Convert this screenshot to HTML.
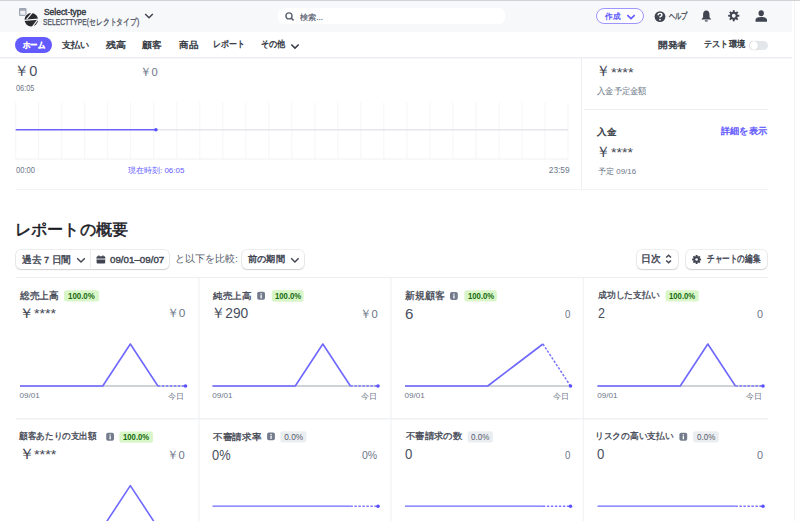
<!DOCTYPE html>
<html><head><meta charset="utf-8"><title>Stripe dashboard</title>
<style>
*{box-sizing:border-box;margin:0;padding:0}
html,body{width:800px;height:521px;overflow:hidden;background:#fff}
body{position:relative;font-family:"Liberation Sans",sans-serif;color:#414552}
.a{position:absolute;white-space:nowrap;line-height:1;transform-origin:0 0}
.btn{background:#fff;border-radius:5px;box-shadow:0 0 0 1px rgba(64,68,82,.09),0 1px 1.5px rgba(0,0,0,.13)}
</style></head><body>
<svg class="a" style="left:0;top:0" width="800" height="521" viewBox="0 0 800 521"><rect x="0" y="0" width="800" height="1" rx="0" fill="#d2d3d7" /><rect x="0" y="1" width="792" height="31" rx="0" fill="#f6f8fa" /><rect x="794" y="1" width="1" height="520" rx="0" fill="#f2f3f5" /><rect x="0" y="57" width="792" height="1.6" rx="0" fill="#eceef1" /><line x1="15.7" y1="102.3" x2="15.7" y2="159" stroke="#f4f5f7" stroke-width="1" /><line x1="38.71" y1="102.3" x2="38.71" y2="159" stroke="#f4f5f7" stroke-width="1" /><line x1="61.73" y1="102.3" x2="61.73" y2="159" stroke="#f4f5f7" stroke-width="1" /><line x1="84.74" y1="102.3" x2="84.74" y2="159" stroke="#f4f5f7" stroke-width="1" /><line x1="107.75" y1="102.3" x2="107.75" y2="159" stroke="#f4f5f7" stroke-width="1" /><line x1="130.77" y1="102.3" x2="130.77" y2="159" stroke="#f4f5f7" stroke-width="1" /><line x1="153.78" y1="102.3" x2="153.78" y2="159" stroke="#f4f5f7" stroke-width="1" /><line x1="176.79" y1="102.3" x2="176.79" y2="159" stroke="#f4f5f7" stroke-width="1" /><line x1="199.8" y1="102.3" x2="199.8" y2="159" stroke="#f4f5f7" stroke-width="1" /><line x1="222.82" y1="102.3" x2="222.82" y2="159" stroke="#f4f5f7" stroke-width="1" /><line x1="245.83" y1="102.3" x2="245.83" y2="159" stroke="#f4f5f7" stroke-width="1" /><line x1="268.84" y1="102.3" x2="268.84" y2="159" stroke="#f4f5f7" stroke-width="1" /><line x1="291.86" y1="102.3" x2="291.86" y2="159" stroke="#f4f5f7" stroke-width="1" /><line x1="314.87" y1="102.3" x2="314.87" y2="159" stroke="#f4f5f7" stroke-width="1" /><line x1="337.88" y1="102.3" x2="337.88" y2="159" stroke="#f4f5f7" stroke-width="1" /><line x1="360.9" y1="102.3" x2="360.9" y2="159" stroke="#f4f5f7" stroke-width="1" /><line x1="383.91" y1="102.3" x2="383.91" y2="159" stroke="#f4f5f7" stroke-width="1" /><line x1="406.92" y1="102.3" x2="406.92" y2="159" stroke="#f4f5f7" stroke-width="1" /><line x1="429.93" y1="102.3" x2="429.93" y2="159" stroke="#f4f5f7" stroke-width="1" /><line x1="452.95" y1="102.3" x2="452.95" y2="159" stroke="#f4f5f7" stroke-width="1" /><line x1="475.96" y1="102.3" x2="475.96" y2="159" stroke="#f4f5f7" stroke-width="1" /><line x1="498.97" y1="102.3" x2="498.97" y2="159" stroke="#f4f5f7" stroke-width="1" /><line x1="521.99" y1="102.3" x2="521.99" y2="159" stroke="#f4f5f7" stroke-width="1" /><line x1="545" y1="102.3" x2="545" y2="159" stroke="#f4f5f7" stroke-width="1" /><line x1="568.01" y1="102.3" x2="568.01" y2="159" stroke="#f4f5f7" stroke-width="1" /><line x1="15.7" y1="159" x2="568" y2="159" stroke="#eef0f2" stroke-width="1" /><line x1="155.9" y1="129.8" x2="568" y2="129.8" stroke="#e4e6ea" stroke-width="1.5" /><line x1="15.7" y1="129.8" x2="155.9" y2="129.8" stroke="#6b63ff" stroke-width="1.6" /><circle cx="155.9" cy="129.8" r="1.8" fill="#5a52ff"/><line x1="581.5" y1="58" x2="581.5" y2="189" stroke="#eceef1" stroke-width="1" /><line x1="584" y1="109.5" x2="768" y2="109.5" stroke="#eceef1" stroke-width="1" /><line x1="16" y1="189.5" x2="768" y2="189.5" stroke="#f2f3f5" stroke-width="1" /><line x1="16" y1="277.5" x2="768" y2="277.5" stroke="#eceef1" stroke-width="1.2" /><line x1="199" y1="278" x2="199" y2="521" stroke="#eef0f2" stroke-width="1" /><line x1="391" y1="278" x2="391" y2="521" stroke="#eef0f2" stroke-width="1" /><line x1="583.3" y1="278" x2="583.3" y2="521" stroke="#eef0f2" stroke-width="1" /><line x1="16" y1="418.8" x2="768" y2="418.8" stroke="#eceef1" stroke-width="1.2" /><line x1="20" y1="386" x2="185.5" y2="386" stroke="#bfc4cc" stroke-width="1.3" /><polyline points="20,386 47.58,386 75.17,386 102.75,386 130.33,344 157.92,386" fill="none" stroke="#6f68ff" stroke-width="1.6" stroke-linejoin="round"/><line x1="157.92" y1="386" x2="185.5" y2="386" stroke="#7a73ff" stroke-width="1.5" stroke-dasharray="2.4 1.6"/><circle cx="185.5" cy="386" r="1.8" fill="#5a52ff"/><line x1="212.5" y1="386" x2="378" y2="386" stroke="#bfc4cc" stroke-width="1.3" /><polyline points="212.5,386 240.08,386 267.67,386 295.25,386 322.83,344 350.42,386" fill="none" stroke="#6f68ff" stroke-width="1.6" stroke-linejoin="round"/><line x1="350.42" y1="386" x2="378" y2="386" stroke="#7a73ff" stroke-width="1.5" stroke-dasharray="2.4 1.6"/><circle cx="378" cy="386" r="1.8" fill="#5a52ff"/><line x1="405" y1="386" x2="570.5" y2="386" stroke="#bfc4cc" stroke-width="1.3" /><polyline points="405,386 432.58,386 460.17,386 487.75,386 515.33,365 542.92,344" fill="none" stroke="#6f68ff" stroke-width="1.6" stroke-linejoin="round"/><line x1="542.92" y1="344" x2="570.5" y2="386" stroke="#7a73ff" stroke-width="1.5" stroke-dasharray="2.4 1.6"/><circle cx="570.5" cy="386" r="1.8" fill="#5a52ff"/><line x1="597.5" y1="386" x2="763" y2="386" stroke="#bfc4cc" stroke-width="1.3" /><polyline points="597.5,386 625.08,386 652.67,386 680.25,386 707.83,344 735.42,386" fill="none" stroke="#6f68ff" stroke-width="1.6" stroke-linejoin="round"/><line x1="735.42" y1="386" x2="763" y2="386" stroke="#7a73ff" stroke-width="1.5" stroke-dasharray="2.4 1.6"/><circle cx="763" cy="386" r="1.8" fill="#5a52ff"/><line x1="20" y1="527.6" x2="185.5" y2="527.6" stroke="#bfc4cc" stroke-width="1.3" /><polyline points="20,527.6 47.58,527.6 75.17,527.6 102.75,527.6 130.33,485.6 157.92,527.6" fill="none" stroke="#6f68ff" stroke-width="1.6" stroke-linejoin="round"/><line x1="157.92" y1="527.6" x2="185.5" y2="527.6" stroke="#7a73ff" stroke-width="1.5" stroke-dasharray="2.4 1.6"/><circle cx="185.5" cy="527.6" r="1.8" fill="#5a52ff"/><polyline points="212.5,506.2 240.08,506.2 267.67,506.2 295.25,506.2 322.83,506.2 350.42,506.2" fill="none" stroke="#6f68ff" stroke-width="1.3" stroke-linejoin="round"/><line x1="350.42" y1="506.2" x2="378" y2="506.2" stroke="#7a73ff" stroke-width="1.5" stroke-dasharray="2.4 1.6"/><circle cx="378" cy="506.2" r="1.8" fill="#5a52ff"/><polyline points="405,506.2 432.58,506.2 460.17,506.2 487.75,506.2 515.33,506.2 542.92,506.2" fill="none" stroke="#6f68ff" stroke-width="1.3" stroke-linejoin="round"/><line x1="542.92" y1="506.2" x2="570.5" y2="506.2" stroke="#7a73ff" stroke-width="1.5" stroke-dasharray="2.4 1.6"/><circle cx="570.5" cy="506.2" r="1.8" fill="#5a52ff"/><polyline points="597.5,506.2 625.08,506.2 652.67,506.2 680.25,506.2 707.83,506.2 735.42,506.2" fill="none" stroke="#6f68ff" stroke-width="1.3" stroke-linejoin="round"/><line x1="735.42" y1="506.2" x2="763" y2="506.2" stroke="#7a73ff" stroke-width="1.5" stroke-dasharray="2.4 1.6"/><circle cx="763" cy="506.2" r="1.8" fill="#5a52ff"/><rect x="64" y="290.25" width="35" height="11.25" rx="2.5" fill="#d9f6c8" /><rect x="271.75" y="290" width="31.85" height="11.75" rx="2.5" fill="#d9f6c8" /><rect x="464.4" y="290.25" width="32.5" height="11.25" rx="2.5" fill="#d9f6c8" /><rect x="665.5" y="290.25" width="33.25" height="11.25" rx="2.5" fill="#d9f6c8" /><rect x="119.4" y="431.5" width="33.6" height="11.3" rx="2.5" fill="#d9f6c8" /><rect x="280.25" y="431.25" width="26.25" height="11.25" rx="2.5" fill="#ebeef1" /><rect x="467.5" y="431.25" width="25.5" height="11.25" rx="2.5" fill="#ebeef1" /><rect x="693" y="431.25" width="25.75" height="11.25" rx="2.5" fill="#ebeef1" /><rect x="257.2" y="291.8" width="7.8" height="7.9" rx="1.8" fill="#737b8c" /><rect x="260.5" y="295.1" width="1.3" height="3.2" rx="0" fill="#fff" /><rect x="260.5" y="293.3" width="1.3" height="1.2" rx="0" fill="#fff" /><rect x="450" y="292" width="7.8" height="7.9" rx="1.8" fill="#737b8c" /><rect x="453.3" y="295.3" width="1.3" height="3.2" rx="0" fill="#fff" /><rect x="453.3" y="293.5" width="1.3" height="1.2" rx="0" fill="#fff" /><rect x="106.2" y="432.8" width="7.8" height="7.9" rx="1.8" fill="#737b8c" /><rect x="109.5" y="436.1" width="1.3" height="3.2" rx="0" fill="#fff" /><rect x="109.5" y="434.3" width="1.3" height="1.2" rx="0" fill="#fff" /><rect x="267.1" y="432.4" width="7.8" height="7.9" rx="1.8" fill="#737b8c" /><rect x="270.4" y="435.7" width="1.3" height="3.2" rx="0" fill="#fff" /><rect x="270.4" y="433.9" width="1.3" height="1.2" rx="0" fill="#fff" /><rect x="679.4" y="432.8" width="7.8" height="7.9" rx="1.8" fill="#737b8c" /><rect x="682.7" y="436.1" width="1.3" height="3.2" rx="0" fill="#fff" /><rect x="682.7" y="434.3" width="1.3" height="1.2" rx="0" fill="#fff" /></svg>
<!-- logo -->
<svg class="a" style="left:18px;top:7px" width="22" height="22" viewBox="0 0 22 22">
<rect x="1.6" y="1.7" width="6.3" height="6.6" rx="0.6" fill="#eef0f4" stroke="#9ea5b3" stroke-width="1.2"/>
<rect x="1.6" y="1.7" width="6.3" height="2" fill="#9ea5b3"/>
<circle cx="13.3" cy="12.8" r="7.4" fill="#f6f8fa"/>
<circle cx="13.3" cy="12.8" r="6.8" fill="#2a2a2e"/>
<path d="M14.2 5.6 L8.6 12.4" stroke="#f6f8fa" stroke-width="1.1"/>
<path d="M5.6 13.4 L21 12.2" stroke="#f6f8fa" stroke-width="1.3"/>
<path d="M19.6 12.9 L14.2 20.2" stroke="#f6f8fa" stroke-width="1.1"/>
</svg>
<svg class="a" style="left:144px;top:12px" width="10" height="8" viewBox="0 0 10 8"><path d="M1.2 2 L5 5.8 L8.8 2" stroke="#414552" stroke-width="1.5" fill="none"/></svg>
<!-- search -->
<div class="a" style="left:277.5px;top:7.8px;width:227px;height:16px;background:#fff;border-radius:6px"></div>
<svg class="a" style="left:285px;top:12px" width="10" height="9" viewBox="0 0 10 9"><circle cx="4" cy="3.9" r="3" stroke="#5b6170" stroke-width="1.4" fill="none"/><path d="M6.2 6.1 L8.6 8.4" stroke="#5b6170" stroke-width="1.5"/></svg>
<!-- create -->
<div class="a" style="left:596px;top:7.8px;width:48px;height:16.5px;border:1.3px solid #9d96ff;border-radius:8.5px;background:#fdfdff"></div>
<svg class="a" style="left:626px;top:14px" width="10" height="6" viewBox="0 0 10 6"><path d="M1.3 1.2 L5 4.6 L8.7 1.2" stroke="#635bff" stroke-width="1.6" fill="none"/></svg>
<!-- help -->
<svg class="a" style="left:654px;top:11px" width="12" height="12" viewBox="0 0 12 12"><circle cx="6" cy="5.6" r="5.4" fill="#414552"/><path d="M4.1 4.3 Q4.1 2.4 6 2.4 Q7.9 2.4 7.9 4 Q7.9 5.1 6 5.8 V6.6" stroke="#fff" stroke-width="1.4" fill="none"/><circle cx="6" cy="8.6" r=".85" fill="#fff"/></svg>
<!-- bell -->
<svg class="a" style="left:701px;top:10px" width="11" height="12" viewBox="0 0 11 12"><path d="M5.3 .5 C2.9 .5 2.1 2.4 2.1 4.6 V7.3 L.3 9.4 H10.3 L8.5 7.3 V4.6 C8.5 2.4 7.7 .5 5.3 .5Z" fill="#414552"/><rect x="3.8" y="10.2" width="3" height="1.4" rx=".7" fill="#414552"/></svg>
<!-- gear -->
<svg class="a" style="left:728px;top:10px" width="12" height="12" viewBox="0 0 12 12"><g stroke="#414552" stroke-width="1.9"><path d="M5.75 .2 V11.3"/><path d="M.2 5.75 H11.3"/><path d="M1.8 1.8 L9.7 9.7"/><path d="M9.7 1.8 L1.8 9.7"/></g><circle cx="5.75" cy="5.75" r="3.9" fill="#414552"/><circle cx="5.75" cy="5.75" r="1.9" fill="#f6f8fa"/></svg>
<!-- person -->
<svg class="a" style="left:755px;top:10px" width="13" height="12" viewBox="0 0 13 12"><ellipse cx="6.25" cy="3.3" rx="2.7" ry="3" fill="#414552"/><path d="M.5 11.8 V10 C.5 8 2.5 6.9 6.25 6.9 C10 6.9 12 8 12 10 V11.8Z" fill="#414552"/></svg>
<!-- home pill -->
<div class="a" style="left:15.4px;top:36.8px;width:36.5px;height:16.3px;border-radius:8.2px;background:#635bff"></div>
<svg class="a" style="left:290px;top:42.5px" width="10" height="7" viewBox="0 0 10 7"><path d="M1.3 1.5 L5 5.1 L8.7 1.5" stroke="#353a44" stroke-width="1.5" fill="none"/></svg>
<!-- toggle -->
<div class="a" style="left:749.2px;top:40.6px;width:18.7px;height:9.8px;border-radius:5px;background:#e3e6ea"></div>
<div class="a" style="left:750px;top:41.4px;width:8.2px;height:8.2px;border-radius:50%;background:#fff;box-shadow:0 0 1px rgba(0,0,0,.35)"></div>

<!-- report buttons -->
<div class="a btn" style="left:15.8px;top:249.5px;width:153.6px;height:19.2px"></div>
<div class="a" style="left:89.5px;top:250px;width:1px;height:18.2px;background:#ebeef1"></div>
<svg class="a" style="left:76px;top:256.5px" width="10" height="7" viewBox="0 0 10 7"><path d="M1.2 1.3 L5 5 L8.8 1.3" stroke="#414552" stroke-width="1.4" fill="none"/></svg>
<svg class="a" style="left:95.5px;top:255px" width="10" height="9" viewBox="0 0 10 9"><rect x=".6" y="1.2" width="8.6" height="7.2" rx="1" fill="#414552"/><rect x=".6" y="3.6" width="8.6" height="0.9" fill="#fff"/><rect x="2.3" y=".4" width="1.2" height="1.6" fill="#414552"/><rect x="6.3" y=".4" width="1.2" height="1.6" fill="#414552"/></svg>
<div class="a btn" style="left:241.8px;top:249.5px;width:62.2px;height:19.2px"></div>
<svg class="a" style="left:290px;top:257px" width="10" height="7" viewBox="0 0 10 7"><path d="M1.2 1.3 L4.9 5 L8.6 1.3" stroke="#414552" stroke-width="1.4" fill="none"/></svg>
<div class="a btn" style="left:637px;top:249.5px;width:41.2px;height:19.2px"></div>
<svg class="a" style="left:665px;top:254px" width="8" height="10" viewBox="0 0 8 10"><path d="M1.2 3.6 L3.6 1.2 L6 3.6 M1.2 6.4 L3.6 8.8 L6 6.4" stroke="#414552" stroke-width="1.4" fill="none"/></svg>
<div class="a btn" style="left:686px;top:249.5px;width:81px;height:19.2px"></div>
<svg class="a" style="left:691.5px;top:255px" width="10" height="9" viewBox="0 0 10 9"><g stroke="#414552" stroke-width="1.9"><path d="M4.6 0 V9"/><path d="M0.1 4.5 H9.1"/><path d="M1.4 1.3 L7.8 7.7"/><path d="M7.8 1.3 L1.4 7.7"/></g><circle cx="4.6" cy="4.5" r="3.2" fill="#414552"/><circle cx="4.6" cy="4.5" r="1.3" fill="#fff"/></svg>
<div class="a" style="left:43.54px;top:8.86px;font-size:8.2px;font-weight:400;-webkit-text-stroke:0.4px #353a44;color:#353a44;transform:scaleX(1.03)">Select-type</div>
<div class="a" style="left:42.66px;top:18.23px;font-size:8.9px;font-weight:400;-webkit-text-stroke:0.25px #4a4f5e;color:#4a4f5e;transform:scaleX(0.76)">SELECTTYPE(セレクトタイプ)</div>
<div class="a" style="left:299.92px;top:13.64px;font-size:8px;font-weight:400;-webkit-text-stroke:0.2px #5a6070;color:#5a6070;transform:scaleX(1.02)">検索...</div>
<div class="a" style="left:605.49px;top:13.35px;font-size:8.2px;font-weight:700;color:#635bff;transform:scaleX(0.95)">作成</div>
<div class="a" style="left:668.52px;top:12.19px;font-size:8.5px;font-weight:400;-webkit-text-stroke:0.35px #414552;color:#414552;transform:scaleX(0.69)">ヘルプ</div>
<div class="a" style="left:22.69px;top:41.36px;font-size:9.3px;font-weight:700;-webkit-text-stroke:0.25px #ffffff;color:#ffffff;transform:scaleX(0.81)">ホーム</div>
<div class="a" style="left:61.81px;top:40.4px;font-size:9.4px;font-weight:400;-webkit-text-stroke:0.4px #353a44;color:#353a44;transform:scaleX(1.02)">支払い</div>
<div class="a" style="left:105.74px;top:40.4px;font-size:9.4px;font-weight:400;-webkit-text-stroke:0.4px #353a44;color:#353a44;transform:scaleX(1.11)">残高</div>
<div class="a" style="left:141.9px;top:40.4px;font-size:9.4px;font-weight:400;-webkit-text-stroke:0.4px #353a44;color:#353a44;transform:scaleX(1.09)">顧客</div>
<div class="a" style="left:178.65px;top:40.4px;font-size:9.4px;font-weight:400;-webkit-text-stroke:0.4px #353a44;color:#353a44;transform:scaleX(1.06)">商品</div>
<div class="a" style="left:213.43px;top:40.4px;font-size:9.3px;font-weight:400;-webkit-text-stroke:0.4px #353a44;color:#353a44;transform:scaleX(0.88)">レポート</div>
<div class="a" style="left:260.77px;top:40.4px;font-size:9.3px;font-weight:400;-webkit-text-stroke:0.4px #353a44;color:#353a44;transform:scaleX(0.9)">その他</div>
<div class="a" style="left:657.61px;top:40.4px;font-size:9.4px;font-weight:400;-webkit-text-stroke:0.4px #353a44;color:#353a44;transform:scaleX(1.08)">開発者</div>
<div class="a" style="left:704.11px;top:40.4px;font-size:9.3px;font-weight:400;-webkit-text-stroke:0.4px #353a44;color:#353a44;transform:scaleX(0.91)">テスト環境</div>
<div class="a" style="left:14.27px;top:64.1px;font-size:14.5px;font-weight:400;color:#4a4f5d">￥0</div>
<div class="a" style="left:140.49px;top:65.61px;font-size:11.7px;font-weight:400;color:#6c7688;transform:scaleX(0.95)">￥0</div>
<div class="a" style="left:15.7px;top:84.4px;font-size:8.3px;font-weight:400;color:#6c7688;transform:scaleX(0.89)">06:05</div>
<div class="a" style="left:16.18px;top:166.45px;font-size:8.3px;font-weight:400;color:#6c7688;transform:scaleX(0.91)">00:00</div>
<div class="a" style="left:127.95px;top:166.62px;font-size:8px;font-weight:400;color:#635bff">現在時刻: 06:05</div>
<div class="a" style="left:548.81px;top:166.12px;font-size:8.3px;font-weight:400;color:#6c7688">23:59</div>
<div class="a" style="left:596.01px;top:64.1px;font-size:14.5px;font-weight:400;color:#414552;transform:scaleX(0.95)">￥</div>
<div class="a" style="left:610.71px;top:65.75px;font-size:13.5px;font-weight:400;color:#414552;transform:scaleX(1.08)">****</div>
<div class="a" style="left:596.92px;top:86.82px;font-size:8.5px;font-weight:400;color:#6c7688;transform:scaleX(0.92)">入金予定金額</div>
<div class="a" style="left:597.49px;top:127.63px;font-size:9px;font-weight:400;-webkit-text-stroke:0.4px #353a44;color:#353a44;transform:scaleX(1.07)">入金</div>
<div class="a" style="left:720.91px;top:127.01px;font-size:9.1px;font-weight:400;-webkit-text-stroke:0.4px #635bff;color:#635bff;transform:scaleX(1.02)">詳細を表示</div>
<div class="a" style="left:595.53px;top:144.69px;font-size:14.5px;font-weight:400;color:#414552;transform:scaleX(0.95)">￥</div>
<div class="a" style="left:611.09px;top:145.55px;font-size:13.5px;font-weight:400;color:#414552;transform:scaleX(1.04)">****</div>
<div class="a" style="left:597.69px;top:167.52px;font-size:7.8px;font-weight:400;color:#6c7688;transform:scaleX(1.01)">予定 09/16</div>
<div class="a" style="left:14.9px;top:221.22px;font-size:16.4px;font-weight:400;-webkit-text-stroke:0.5px #1a1b25;color:#1a1b25;transform:scaleX(1.01)">レポートの概要</div>
<div class="a" style="left:21.68px;top:254.77px;font-size:9.5px;font-weight:400;-webkit-text-stroke:0.4px #414552;color:#414552;transform:scaleX(0.97)">過去 7 日間</div>
<div class="a" style="left:110.35px;top:255.05px;font-size:9.4px;font-weight:400;-webkit-text-stroke:0.4px #414552;color:#414552;transform:scaleX(1.04)">09/01–09/07</div>
<div class="a" style="left:174.97px;top:254.38px;font-size:9.7px;font-weight:400;color:#545969">と以下を比較:</div>
<div class="a" style="left:247.92px;top:255.03px;font-size:9.3px;font-weight:400;-webkit-text-stroke:0.4px #414552;color:#414552;transform:scaleX(1.02)">前の期間</div>
<div class="a" style="left:641.32px;top:254.03px;font-size:9.6px;font-weight:400;-webkit-text-stroke:0.4px #414552;color:#414552;transform:scaleX(0.99)">日次</div>
<div class="a" style="left:706.61px;top:254.27px;font-size:10.2px;font-weight:400;-webkit-text-stroke:0.4px #414552;color:#414552;transform:scaleX(0.76)">チャートの編集</div>
<div class="a" style="left:20px;top:291.4px;font-size:9.5px;font-weight:400;-webkit-text-stroke:0.3px #414552;color:#414552;transform:scaleX(0.97)">総売上高</div>
<div class="a" style="left:213px;top:291.4px;font-size:9.4px;font-weight:400;-webkit-text-stroke:0.3px #414552;color:#414552;transform:scaleX(1.06)">純売上高</div>
<div class="a" style="left:405.24px;top:291.4px;font-size:9.5px;font-weight:400;-webkit-text-stroke:0.3px #414552;color:#414552;transform:scaleX(0.99)">新規顧客</div>
<div class="a" style="left:597.58px;top:291.4px;font-size:9.2px;font-weight:400;-webkit-text-stroke:0.3px #414552;color:#414552;transform:scaleX(0.98)">成功した支払い</div>
<div class="a" style="left:68.49px;top:292.41px;font-size:8.9px;font-weight:700;color:#176b10;transform:scaleX(0.89)">100.0%</div>
<div class="a" style="left:275.12px;top:292.41px;font-size:8.9px;font-weight:700;color:#176b10;transform:scaleX(0.87)">100.0%</div>
<div class="a" style="left:468.01px;top:292.41px;font-size:8.9px;font-weight:700;color:#176b10;transform:scaleX(0.87)">100.0%</div>
<div class="a" style="left:669.38px;top:292.41px;font-size:8.9px;font-weight:700;color:#176b10;transform:scaleX(0.87)">100.0%</div>
<div class="a" style="left:19.29px;top:305.79px;font-size:14.4px;font-weight:400;color:#414552;transform:scaleX(1.07)">￥</div>
<div class="a" style="left:34.46px;top:308.11px;font-size:12.8px;font-weight:400;color:#414552;transform:scaleX(1.1)">****</div>
<div class="a" style="left:210.99px;top:305.68px;font-size:14.5px;font-weight:400;color:#4a4f5d;transform:scaleX(0.95)">￥290</div>
<div class="a" style="left:404.67px;top:306.78px;font-size:14px;font-weight:400;color:#4a4f5d;transform:scaleX(1.08)">6</div>
<div class="a" style="left:598.07px;top:307.44px;font-size:13.8px;font-weight:400;color:#4a4f5d;transform:scaleX(0.91)">2</div>
<div class="a" style="left:166.79px;top:308.48px;font-size:11.8px;font-weight:400;color:#6c7688">￥0</div>
<div class="a" style="left:360.31px;top:308.96px;font-size:11.8px;font-weight:400;color:#6c7688;transform:scaleX(0.95)">￥0</div>
<div class="a" style="left:564.89px;top:308.84px;font-size:11.5px;font-weight:400;color:#6c7688;transform:scaleX(0.84)">0</div>
<div class="a" style="left:757.05px;top:308.84px;font-size:11.5px;font-weight:400;color:#6c7688;transform:scaleX(0.94)">0</div>
<div class="a" style="left:19.41px;top:392.28px;font-size:8.1px;font-weight:400;color:#6c7688">09/01</div>
<div class="a" style="left:168.41px;top:391.55px;font-size:8.3px;font-weight:400;color:#6c7688">今日</div>
<div class="a" style="left:212.26px;top:392.28px;font-size:8.1px;font-weight:400;color:#6c7688">09/01</div>
<div class="a" style="left:361.26px;top:391.55px;font-size:8.3px;font-weight:400;color:#6c7688">今日</div>
<div class="a" style="left:404.41px;top:392.28px;font-size:8.1px;font-weight:400;color:#6c7688">09/01</div>
<div class="a" style="left:553.41px;top:391.55px;font-size:8.3px;font-weight:400;color:#6c7688">今日</div>
<div class="a" style="left:597.26px;top:392.28px;font-size:8.1px;font-weight:400;color:#6c7688">09/01</div>
<div class="a" style="left:746.26px;top:391.55px;font-size:8.3px;font-weight:400;color:#6c7688">今日</div>
<div class="a" style="left:19.45px;top:432.3px;font-size:9.2px;font-weight:400;-webkit-text-stroke:0.3px #414552;color:#414552;transform:scaleX(0.96)">顧客あたりの支出額</div>
<div class="a" style="left:212.75px;top:432.3px;font-size:9.4px;font-weight:400;-webkit-text-stroke:0.3px #414552;color:#414552;transform:scaleX(1.07)">不審請求率</div>
<div class="a" style="left:405.75px;top:432.3px;font-size:9.3px;font-weight:400;-webkit-text-stroke:0.3px #414552;color:#414552;transform:scaleX(1.04)">不審請求の数</div>
<div class="a" style="left:595.15px;top:432.3px;font-size:9px;font-weight:400;-webkit-text-stroke:0.3px #414552;color:#414552;transform:scaleX(0.97)">リスクの高い支払い</div>
<div class="a" style="left:123.38px;top:433.04px;font-size:8.9px;font-weight:700;color:#176b10;transform:scaleX(0.87)">100.0%</div>
<div class="a" style="left:284.24px;top:433.23px;font-size:8.3px;font-weight:400;color:#545969">0.0%</div>
<div class="a" style="left:470.68px;top:433.23px;font-size:8.3px;font-weight:400;color:#545969;transform:scaleX(0.97)">0.0%</div>
<div class="a" style="left:696.68px;top:433.23px;font-size:8.3px;font-weight:400;color:#545969;transform:scaleX(0.97)">0.0%</div>
<div class="a" style="left:18.71px;top:447.27px;font-size:14.6px;font-weight:400;color:#414552;transform:scaleX(1.04)">￥</div>
<div class="a" style="left:34.19px;top:449.11px;font-size:12.8px;font-weight:400;color:#414552;transform:scaleX(1.12)">****</div>
<div class="a" style="left:212.34px;top:448.58px;font-size:13.8px;font-weight:400;color:#4a4f5d;transform:scaleX(0.93)">0%</div>
<div class="a" style="left:405.17px;top:446.68px;font-size:14.5px;font-weight:400;color:#4a4f5d;transform:scaleX(0.91)">0</div>
<div class="a" style="left:597.32px;top:446.68px;font-size:14.5px;font-weight:400;color:#4a4f5d;transform:scaleX(0.91)">0</div>
<div class="a" style="left:167.31px;top:449.74px;font-size:11.8px;font-weight:400;color:#6c7688;transform:scaleX(0.95)">￥0</div>
<div class="a" style="left:362.43px;top:449.88px;font-size:11.3px;font-weight:400;color:#6c7688;transform:scaleX(0.93)">0%</div>
<div class="a" style="left:564.89px;top:449.84px;font-size:11.5px;font-weight:400;color:#6c7688;transform:scaleX(0.84)">0</div>
<div class="a" style="left:757.05px;top:449.84px;font-size:11.5px;font-weight:400;color:#6c7688;transform:scaleX(0.94)">0</div>
</body></html>
